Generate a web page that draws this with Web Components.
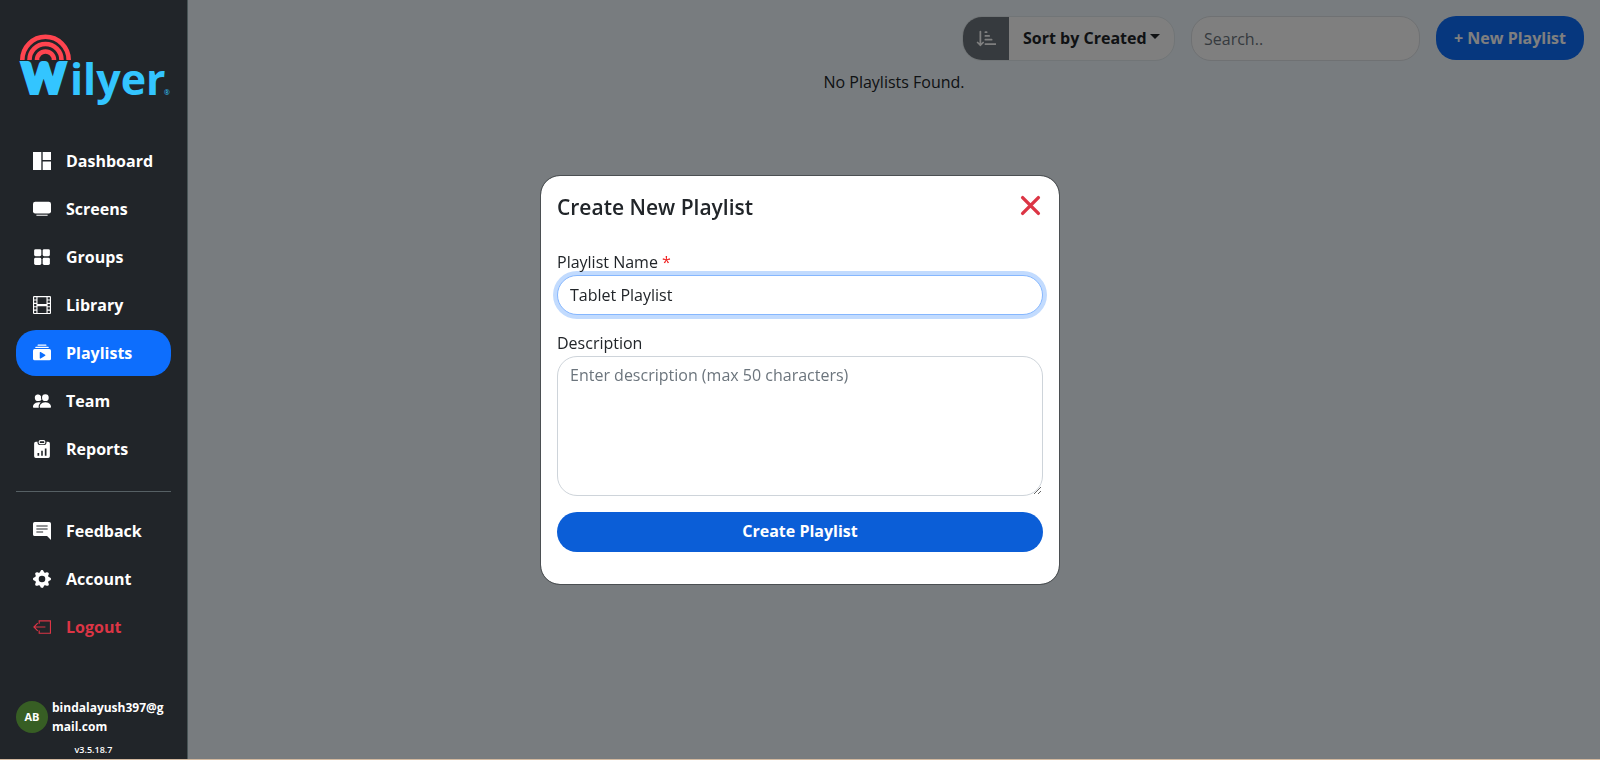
<!DOCTYPE html>
<html lang="en">
<head>
<meta charset="utf-8">
<title>Wilyer - Playlists</title>
<style>
    html,
    body {
        margin: 0;
        height: 100%;
    }

    body {
        font: 16px/25px "Open Sans", "Noto Sans", sans-serif;
        color: #212529;
    }
</style>
</head>
<body>
<app-shell>
    <app-sidebar slot="sidebar">
        <nav-item icon="dashboard">Dashboard</nav-item>
        <nav-item icon="screen">Screens</nav-item>
        <nav-item icon="groups">Groups</nav-item>
        <nav-item icon="film">Library</nav-item>
        <nav-item icon="playlist" active>Playlists</nav-item>
        <nav-item icon="team">Team</nav-item>
        <nav-item icon="report">Reports</nav-item>
        <nav-item slot="secondary" icon="feedback">Feedback</nav-item>
        <nav-item slot="secondary" icon="gear">Account</nav-item>
        <nav-item slot="secondary" icon="logout" danger>Logout</nav-item>
        <user-badge slot="footer" initials="AB">bindalayush397@gmail.com</user-badge>
        <span slot="version">v3.5.18.7</span>
    </app-sidebar>
    <playlist-toolbar></playlist-toolbar>
    <empty-message>No Playlists Found.</empty-message>
    <modal-dialog slot="modal" heading="Create New Playlist">
        <playlist-form></playlist-form>
    </modal-dialog>
</app-shell>

<script>
const icons = {
    dashboard: `<path d="M0 0h7.4v16H0zM8.6 0H16v7H8.6zM8.6 8.4H16V16H8.6z"/>`,
    screen: `<rect y="1.5" width="16" height="10.5" rx="2"/><path d="M3 13h10v1.2H3z" opacity=".75"/>`,
    groups: `<rect x="1" y="1" width="6.4" height="6.4" rx="1.3"/><rect x="8.6" y="1" width="6.4" height="6.4" rx="1.3"/><rect x="1" y="8.6" width="6.4" height="6.4" rx="1.3"/><rect x="8.6" y="8.6" width="6.4" height="6.4" rx="1.3"/>`,
    film: `<path fill-rule="evenodd" d="M0 1a1 1 0 0 1 1-1h14a1 1 0 0 1 1 1v14a1 1 0 0 1-1 1H1a1 1 0 0 1-1-1V1zm4 0v6h8V1H4zm8 8H4v6h8V9zM1 1v2h2V1H1zm2 3H1v2h2V4zM1 7v2h2V7H1zm2 3H1v2h2v-2zm-2 3v2h2v-2H1zM15 1h-2v2h2V1zm-2 3v2h2V4h-2zm2 3h-2v2h2V7zm-2 3v2h2v-2h-2zm2 3h-2v2h2v-2z"/>`,
    playlist: `<path d="M2.5 3.5a.5.5 0 0 1 0-1h11a.5.5 0 0 1 0 1h-11zm2-2a.5.5 0 0 1 0-1h7a.5.5 0 0 1 0 1h-7z"/><path fill-rule="evenodd" d="M0 6v7a1.5 1.5 0 0 0 1.5 1.5h13A1.5 1.5 0 0 0 16 13V6a1.5 1.5 0 0 0-1.5-1.5h-13A1.5 1.5 0 0 0 0 6zm6.3 1.1a.5.5 0 0 1 .5 0l4 2.5a.5.5 0 0 1 0 .8l-4 2.5A.5.5 0 0 1 6 12.5v-5a.5.5 0 0 1 .3-.4z"/>`,
    team: `<circle cx="11" cy="5" r="3"/><path d="M7 14s-1 0-1-1 1-4 5-4 5 3 5 4-1 1-1 1H7z"/><path d="M5.2 14A2.2 2.2 0 0 1 5 13c0-1.4.7-2.7 1.9-3.7A6.3 6.3 0 0 0 5 9c-4 0-5 3-5 4s1 1 1 1h4.2z"/><path d="M4.5 8A2.9 2.9 0 1 1 7.2 4a4 4 0 0 0 .3 2.8A3 3 0 0 1 4.5 8z"/>`,
    report: `<path fill-rule="evenodd" d="M3 1.5h-.5A1.5 1.5 0 0 0 1 3v11.5A1.5 1.5 0 0 0 2.5 16h11a1.5 1.5 0 0 0 1.5-1.5V3a1.5 1.5 0 0 0-1.5-1.5H12v1a2 2 0 0 1-2 2H6a2 2 0 0 1-2-2v-1zM10.5 7.5H12V14h-1.5zM7.3 9.5h1.4V14H7.3zM4 11.5h1.5V14H4z"/><rect x="5.5" y=".6" width="5" height="2.6" rx="1" fill="none" stroke="currentColor"/>`,
    feedback: `<path fill-rule="evenodd" d="M1.5 0h13A1.5 1.5 0 0 1 16 1.5V16l-3.5-3.5h-11A1.5 1.5 0 0 1 0 11V1.5A1.5 1.5 0 0 1 1.5 0zM3 3v1h10V3zm0 2.7v1h10v-1zm0 2.7v1h6v-1z"/>`,
    gear: `<path d="M9.405 1.05c-.413-1.4-2.397-1.4-2.81 0l-.1.34a1.464 1.464 0 0 1-2.105.872l-.31-.17c-1.283-.698-2.686.705-1.987 1.987l.169.311c.446.82.023 1.841-.872 2.105l-.34.1c-1.4.413-1.4 2.397 0 2.81l.34.1a1.464 1.464 0 0 1 .872 2.105l-.17.31c-.698 1.283.705 2.686 1.987 1.987l.311-.169a1.464 1.464 0 0 1 2.105.872l.1.34c.413 1.4 2.397 1.4 2.81 0l.1-.34a1.464 1.464 0 0 1 2.105-.872l.31.17c1.283.698 2.686-.705 1.987-1.987l-.169-.311a1.464 1.464 0 0 1 .872-2.105l.34-.1c1.4-.413 1.4-2.397 0-2.81l-.34-.1a1.464 1.464 0 0 1-.872-2.105l.17-.31c.698-1.283-.705-2.686-1.987-1.987l-.311.169a1.464 1.464 0 0 1-2.105-.872l-.1-.34zM8 10.93a2.929 2.929 0 1 1 0-5.86 2.929 2.929 0 0 1 0 5.86z"/>`,
    logout: `<path d="M5.5 5V2.5h10v11h-10V11M11 8H1M4.2 4.6L.8 8l3.4 3.4" fill="none" stroke="currentColor"/>`,
    sort: `<path d="M3.5 2v11M1.3 10.8L3.5 13l2.2-2.2M7.5 2.5h1M7.5 5.5h3M7.5 8.5h5M7.5 12h8" fill="none" stroke="currentColor" stroke-width="1.4" stroke-linecap="round" stroke-linejoin="round"/>`,
    close: `<path d="M2 2l12 12M14 2L2 14" fill="none" stroke="currentColor" stroke-width="2.6" stroke-linecap="round"/>`,
};

function icon(name, size = 18) {
    return `<svg width="${size}" height="${size}" viewBox="0 0 16 16" fill="currentColor" aria-hidden="true">${icons[name]}</svg>`;
}

class BaseElement extends HTMLElement {
    constructor() {
        super();
        this.attachShadow({ mode: "open" });
    }

    connectedCallback() {
        this.shadowRoot.innerHTML = `
            <style>
                *, *::before, *::after { box-sizing: border-box; }
                button, input, select, textarea { font: inherit; margin: 0; }
                svg { display: block; flex: none; }
            </style>
            ${this.render()}
        `;
    }
}

class AppShell extends BaseElement {
    render() {
        return `
            <style>
                :host {
                    display: flex;
                    min-height: 100vh;
                    box-sizing: border-box;
                    border-bottom: 1px solid #d3b99f;
                    background: #f1f9fe;
                }

                main { flex: 1; min-width: 0; }
            </style>
            <slot name="sidebar"></slot>
            <main><slot></slot></main>
            <slot name="modal"></slot>
        `;
    }
}

class AppSidebar extends BaseElement {
    render() {
        return `
            <style>
                :host {
                    position: relative;
                    z-index: 2;
                    flex: none;
                    box-sizing: border-box;
                    display: flex;
                    flex-direction: column;
                    width: 188px;
                    padding: 32px 16px 2px;
                    border-right: 1px solid #485456;
                    background: #212529;
                    color: #fff;
                }

                brand-logo { margin-bottom: 34px; }
                nav { display: grid; gap: 2px; }

                hr {
                    width: 100%;
                    margin: 19px 0 16px;
                    border: 0;
                    border-top: 1px solid #566064;
                }

                footer { margin-top: auto; }

                .version {
                    margin-top: 7px;
                    font-size: 9px;
                    line-height: 14px;
                    font-weight: 600;
                    text-align: center;
                }
            </style>
            <brand-logo></brand-logo>
            <nav aria-label="Main"><slot></slot></nav>
            <hr>
            <nav aria-label="Account"><slot name="secondary"></slot></nav>
            <footer>
                <slot name="footer"></slot>
                <div class="version"><slot name="version"></slot></div>
            </footer>
        `;
    }
}

class BrandLogo extends BaseElement {
    render() {
        return `
            <style>
                :host { display: block; }
                svg { overflow: visible; }
                text { fill: #33c5ff; }
                .initial { font-family: Lato, sans-serif; }
            </style>
            <svg width="155" height="72" viewBox="0 0 155 72" role="img" aria-label="Wilyer">
                <g fill="none" stroke="#ff444f" stroke-width="4.6">
                    <path d="M6.3 28a23.2 23.2 0 0 1 46.4 0"/>
                    <path d="M13.5 28a16 16 0 0 1 32 0"/>
                    <path d="M21 28a8.5 8.5 0 0 1 17 0"/>
                </g>
                <text class="initial" x="6" y="61" font-size="41" font-weight="900" stroke="#33c5ff" stroke-width="4">W</text>
                <text x="54" y="63" font-size="43" font-weight="700">ilyer</text>
                <text x="148" y="63" font-size="7">®</text>
            </svg>
        `;
    }
}

class NavItem extends BaseElement {
    render() {
        return `
            <style>
                :host { display: block; }

                a {
                    display: flex;
                    align-items: center;
                    gap: 15px;
                    height: 46px;
                    padding: 0 17px;
                    border-radius: 20px;
                    color: #fff;
                    font-weight: 700;
                    text-decoration: none;
                }

                :host([active]) a { background: #0d6efd; }
                :host([danger]) a { color: #dc3545; }
            </style>
            <a href="#" ${this.hasAttribute("active") ? 'aria-current="page"' : ""}>
                ${icon(this.getAttribute("icon"))}
                <span><slot></slot></span>
            </a>
        `;
    }
}

class UserBadge extends BaseElement {
    render() {
        return `
            <style>
                :host {
                    display: flex;
                    align-items: center;
                    gap: 4px;
                    font-size: 12px;
                    line-height: 19px;
                    font-weight: 700;
                }

                .avatar {
                    flex: none;
                    width: 32px;
                    border-radius: 50%;
                    background: #375e24;
                    font-size: 11px;
                    line-height: 32px;
                    text-align: center;
                }

                .email { min-width: 0; overflow-wrap: anywhere; }
            </style>
            <span class="avatar">${this.getAttribute("initials")}</span>
            <span class="email"><slot></slot></span>
        `;
    }
}

class PlaylistToolbar extends BaseElement {
    render() {
        return `
            <style>
                :host {
                    display: flex;
                    justify-content: flex-end;
                    align-items: flex-start;
                    gap: 16px;
                    padding: 16px 16px 9px;
                }

                .sort {
                    display: flex;
                    height: 45px;
                    border: 1px solid #e2eaee;
                    border-radius: 20px;
                    background: #fff;
                    overflow: hidden;
                }

                .sort button {
                    width: 46px;
                    padding: 0 13px;
                    border: 0;
                    background: #6c757d;
                    color: #fff;
                }

                .choice { display: grid; align-items: center; }
                .choice > * { grid-area: 1 / 1; }

                select {
                    appearance: none;
                    height: 100%;
                    padding: 0 27px 0 14px;
                    border: 0;
                    background: none;
                    color: #212529;
                    font-weight: 700;
                }

                .choice::after {
                    content: "";
                    grid-area: 1 / 1;
                    justify-self: end;
                    margin: 0 14px 4px 0;
                    border: 5px solid transparent;
                    border-top-color: #212529;
                    border-bottom: 0;
                    pointer-events: none;
                }

                input {
                    width: 229px;
                    height: 45px;
                    padding: 0 12px;
                    border: 1px solid #dee2e6;
                    border-radius: 20px;
                    background: #fff;
                }

                input::placeholder { color: #6c757d; opacity: 1; }

                .new {
                    height: 44px;
                    padding: 0 18px;
                    border: 0;
                    border-radius: 20px;
                    background: #0d6efd;
                    color: #fff;
                    font-weight: 700;
                }
            </style>
            <div class="sort">
                <button type="button" aria-label="Sort direction">${icon("sort", 20)}</button>
                <div class="choice">
                    <select aria-label="Sort by"><option>Sort by Created</option></select>
                </div>
            </div>
            <input type="search" placeholder="Search.." aria-label="Search">
            <button class="new" type="button">+ New Playlist</button>
        `;
    }
}

class EmptyMessage extends BaseElement {
    render() {
        return `
            <style>
                :host { display: block; text-align: center; }
            </style>
            <slot></slot>
        `;
    }
}

class ModalDialog extends BaseElement {
    render() {
        return `
            <style>
                :host {
                    position: fixed;
                    inset: 0 0 1px;
                    z-index: 1;
                    display: grid;
                    place-items: center;
                    background: rgba(0, 0, 0, 0.5);
                }

                section {
                    width: min(520px, 100%);
                    padding: 16px 16px 32px;
                    border: 1px solid #4b4f52;
                    border-radius: 20px;
                    background: #fff;
                    background-clip: padding-box;
                }

                header {
                    display: flex;
                    align-items: center;
                    justify-content: space-between;
                    height: 32px;
                    margin-bottom: 26px;
                }

                h2 { margin: 0; font-size: 21px; font-weight: 600; }

                button {
                    padding: 0 2px 4px;
                    border: 0;
                    background: none;
                    color: #dc3545;
                }
            </style>
            <section role="dialog" aria-modal="true" aria-labelledby="heading">
                <header>
                    <h2 id="heading">${this.getAttribute("heading")}</h2>
                    <button type="button" aria-label="Close">${icon("close", 21)}</button>
                </header>
                <slot></slot>
            </section>
        `;
    }
}

class PlaylistForm extends BaseElement {
    render() {
        return `
            <style>
                :host { display: block; }
                form { display: grid; gap: 16px; }
                label { display: block; }
                .required { color: #f02020; }

                input, textarea {
                    display: block;
                    width: 100%;
                    padding: 6px 12px;
                    border: 1px solid #ced4da;
                    border-radius: 20px;
                    background: #fff;
                    color: #212529;
                    outline: none;
                }

                input {
                    height: 40px;
                    border-color: #86b7fe;
                    box-shadow: 0 0 0 4px #c2dbfe;
                }

                textarea { height: 140px; resize: vertical; }
                textarea::placeholder { color: #6c757d; opacity: 1; }

                button {
                    height: 40px;
                    padding: 0;
                    border: 0;
                    border-radius: 20px;
                    background: #0b5ed7;
                    color: #fff;
                    font-weight: 700;
                }
            </style>
            <form>
                <div>
                    <label for="name">Playlist Name <span class="required">*</span></label>
                    <input id="name" type="text" value="Tablet Playlist">
                </div>
                <div>
                    <label for="description">Description</label>
                    <textarea id="description" maxlength="50" placeholder="Enter description (max 50 characters)"></textarea>
                </div>
                <button type="submit">Create Playlist</button>
            </form>
        `;
    }
}

customElements.define("app-shell", AppShell);
customElements.define("app-sidebar", AppSidebar);
customElements.define("brand-logo", BrandLogo);
customElements.define("nav-item", NavItem);
customElements.define("user-badge", UserBadge);
customElements.define("playlist-toolbar", PlaylistToolbar);
customElements.define("empty-message", EmptyMessage);
customElements.define("modal-dialog", ModalDialog);
customElements.define("playlist-form", PlaylistForm);
</script>
</body>
</html>
